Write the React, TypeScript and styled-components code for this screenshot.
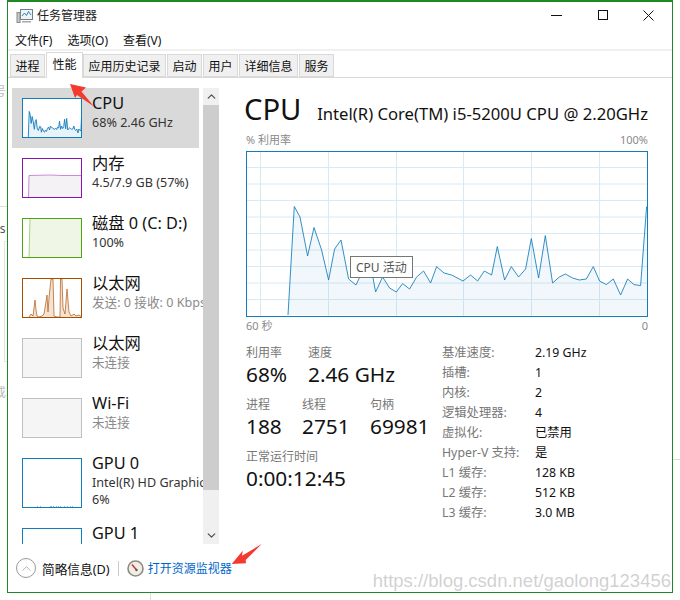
import styled, { createGlobalStyle } from 'styled-components';
import { ChevronUp, ChevronDown } from 'lucide-react';

const GlobalStyle = createGlobalStyle`
  html, body {
    margin: 0;
    padding: 0;
    background: #fff;
    overflow: hidden;
  }
`;

const UI_FONT = `"Noto Sans", "Noto Sans CJK SC", sans-serif`;

const Page = styled.div`
  position: relative;
  width: 680px;
  height: 600px;
  overflow: hidden;
  font-family: ${UI_FONT};
  color: #111;
`;

// the page behind the window, only slivers of it show
const BackGlyph = styled.div<{ $top: number; $dark?: boolean }>`
  position: absolute;
  left: -6px;
  top: ${p => p.$top}px;
  width: 13px;
  overflow: hidden;
  font-size: 12px;
  line-height: 14px;
  white-space: nowrap;
  color: ${p => (p.$dark ? '#555' : '#bbb')};
`;

const BackBox = styled.div`
  position: absolute;
  left: 4px;
  top: 241px;
  width: 3px;
  height: 121px;
  box-sizing: border-box;
  border: 1px solid #e4e4e4;
  border-right: none;
`;

const BackRule = styled.div<{ $left: number; $top: number; $w: number; $h: number }>`
  position: absolute;
  left: ${p => p.$left}px;
  top: ${p => p.$top}px;
  width: ${p => p.$w}px;
  height: ${p => p.$h}px;
  background: #ddd;
`;

const Window = styled.div`
  position: relative;
  box-sizing: border-box;
  margin-left: 7px;
  width: 666px;
  height: 593px;
  border: 1px solid #1f8a24;
  border-top-width: 2px;
  background: #fff;
  display: flex;
  flex-direction: column;
`;

const TitleBar = styled.div`
  height: 28px;
  display: flex;
  align-items: center;
  padding-left: 8px;
  gap: 4px;
  font-size: 12px;
  color: #222;
  svg {
    margin-top: -1px;
  }
`;

const TitleText = styled.span`
  margin-top: -2px;
`;

const WinButtons = styled.div`
  margin-left: auto;
  margin-right: 18px;
  display: flex;
  gap: 35px;
  svg {
    display: block;
  }
`;

const MenuBar = styled.div`
  height: 19px;
  display: flex;
  align-items: center;
  gap: 15px;
  padding-left: 7px;
  font-size: 12px;
`;

const TabStrip = styled.div`
  height: 29px;
  box-sizing: border-box;
  border-top: 2px solid #f0f0f0;
  border-bottom: 1px solid #d9d9d9;
  display: flex;
  align-items: flex-end;
  padding-left: 2px;
`;

const Tab = styled.div<{ $active?: boolean }>`
  box-sizing: border-box;
  height: ${p => (p.$active ? '26px' : '23px')};
  margin-bottom: ${p => (p.$active ? '-1px' : '0')};
  padding: ${p => (p.$active ? '0 5.5px 3px' : '0 4.5px')};
  margin-right: ${p => (p.$active ? '0' : '1px')};
  display: flex;
  align-items: center;
  font-size: 12px;
  background: ${p => (p.$active ? '#fff' : '#f0f0f0')};
  border: 1px solid #d9d9d9;
  border-bottom: ${p => (p.$active ? 'none' : '1px solid #d9d9d9')};
`;

const Body = styled.div`
  height: 466px;
  box-sizing: border-box;
  flex-shrink: 0;
  display: flex;
  padding-top: 10px;
`;

const SideList = styled.div`
  margin-left: 4px;
  width: 191px;
  height: 456px;
  overflow: hidden;
  flex-shrink: 0;
`;

const Row = styled.div<{ $selected?: boolean }>`
  display: flex;
  gap: 10px;
  padding: 10px 0 10px 10px;
  margin-right: 4px;
  background: ${p => (p.$selected ? '#d9d9d9' : 'transparent')};
`;

const Thumb = styled.svg<{ $h?: number }>`
  display: block;
  flex-shrink: 0;
  width: 60px;
  height: ${p => p.$h ?? 40}px;
`;

const RowText = styled.div`
  min-width: 0;
  white-space: nowrap;
  margin-top: -5px;
`;

const RowName = styled.div`
  font-size: 16.3px;
  line-height: 21px;
`;

const RowSub = styled.div<{ $muted?: boolean }>`
  font-size: 12.6px;
  line-height: 17px;
  color: ${p => (p.$muted ? '#8a8a8a' : '#333')};
`;

const ScrollBar = styled.div`
  width: 16px;
  height: 456px;
  flex-shrink: 0;
  background: #f0f0f0;
  display: flex;
  flex-direction: column;
  align-items: center;
  color: #555;
`;

const ScrollArrow = styled.div`
  height: 17px;
  flex-shrink: 0;
  display: flex;
  align-items: center;
  justify-content: center;
`;

const ScrollThumb = styled.div`
  width: 100%;
  height: 385px;
  background: #cdcdcd;
`;

const ScrollGap = styled.div`
  flex: 1;
`;

const Main = styled.div`
  margin-left: 27px;
  width: 402px;
  display: flex;
  flex-direction: column;
`;

const Heading = styled.div`
  display: flex;
  align-items: baseline;
  justify-content: space-between;
  box-sizing: border-box;
  height: 44px;
  padding-top: 3px;
  white-space: nowrap;
`;

const HeadingTitle = styled.div`
  font-size: 29.2px;
  line-height: 36px;
  margin-left: -2px;
`;

const HeadingModel = styled.div`
  font-size: 16.65px;
`;

const AxisRow = styled.div`
  display: flex;
  justify-content: space-between;
  font-size: 11px;
  line-height: 15px;
  color: #8a8a8a;
`;

const ChartWrap = styled.div`
  position: relative;
  height: 166px;
  margin: 4px 0 1px;
`;

const Chart = styled.svg`
  display: block;
  width: 402px;
  height: 166px;
`;

const ChartTip = styled.div`
  position: absolute;
  left: 104px;
  top: 105px;
  box-sizing: border-box;
  height: 22px;
  padding: 0 5px;
  display: flex;
  align-items: center;
  background: #fff;
  border: 1px solid #767676;
  font-size: 12px;
  color: #555;
  white-space: nowrap;
`;

const Stats = styled.div`
  display: flex;
  margin-top: 12px;
`;

const StatsLeft = styled.div`
  width: 196px;
  display: flex;
  flex-direction: column;
  gap: 9px;
`;

const StatLine = styled.div<{ $cols: string }>`
  display: grid;
  grid-template-columns: ${p => p.$cols};
`;

const StatLabel = styled.div`
  font-size: 12px;
  line-height: 16px;
  color: #777;
`;

const StatValue = styled.div`
  font-size: 20.8px;
  line-height: 27px;
  white-space: nowrap;
`;

const Specs = styled.div`
  display: grid;
  grid-template-columns: 93px auto;
  grid-auto-rows: 20px;
  align-items: center;
  font-size: 12.3px;
  margin-top: -3px;
`;

const SpecLabel = styled.div`
  color: #777;
`;

const SpecValue = styled.div`
  color: #111;
`;

const Footer = styled.div`
  flex: 1;
  display: flex;
  align-items: center;
  padding-left: 8px;
`;

const RoundButton = styled.div`
  box-sizing: border-box;
  width: 20px;
  height: 20px;
  border-radius: 50%;
  border: 1px solid #999;
  color: #999;
  display: flex;
  align-items: center;
  justify-content: center;
  margin-right: 6px;
`;

const FooterLabel = styled.span`
  font-size: 12.7px;
`;

const FooterDivider = styled.div`
  width: 1px;
  height: 15px;
  background: #ccc;
  margin: 0 8px;
`;

const MonitorLink = styled.span`
  color: #0066cc;
  font-size: 12px;
  margin-left: 4px;
`;

const Overlay = styled.svg`
  position: absolute;
  left: 0;
  top: 0;
  width: 680px;
  height: 600px;
  pointer-events: none;
`;

const Watermark = styled.div`
  position: absolute;
  right: 9px;
  top: 570px;
  font-family: "Liberation Sans", Arial, sans-serif;
  font-size: 18.5px;
  line-height: 22px;
  color: rgba(170, 170, 170, 0.55);
  white-space: nowrap;
`;

// CPU history in page pixels, read off the big graph
const CPU_POINTS: [number, number][] = [
  [288, 315], [294.3, 206.5], [300, 217], [307.6, 256], [314, 227.5], [321.6, 250], [328.6, 280],
  [334.6, 249], [341, 240], [348.6, 279], [356, 285], [364, 268], [371.6, 270], [375.6, 292],
  [382.6, 277], [389.6, 288], [396.3, 292], [402.6, 283.6], [409.6, 289], [416.6, 277],
  [423.6, 271], [430.6, 283], [436.6, 266.6], [444, 273], [451.6, 275], [463, 281], [470.6, 275],
  [477.6, 281], [484.3, 271], [491.6, 275], [497.3, 246.6], [504.6, 280], [511.3, 266.6],
  [518.6, 277], [525.6, 269], [531.3, 238.6], [538.6, 278], [545.3, 235.6], [552.6, 283],
  [559.3, 277], [565.3, 274], [572.6, 278], [579.3, 280], [586.3, 279], [593.3, 266.6],
  [599.6, 281], [606.3, 284.6], [613.3, 279], [620.6, 295], [627.6, 279], [634, 284.6],
  [640.6, 285.6], [646.6, 206.6],
];

const toPath = (pts: [number, number][]) => pts.map(([x, y]) => `${x},${y}`).join(' ');

const BLUE = '#117dbb';

function BigChart() {
  const vLines = [260, 328, 396, 463, 531, 599];
  const hLines = [167.5, 184, 200.5, 217, 233.5, 250, 266.5, 283, 299.5];
  const line = toPath(CPU_POINTS);
  return (
    <Chart viewBox="246 151 402 166">
      {vLines.map(x => <line key={x} x1={x + 0.5} x2={x + 0.5} y1={151} y2={316} stroke="#d9eaf5" />)}
      {hLines.map(y => <line key={y} x1={246} x2={647} y1={y} y2={y} stroke="#d9eaf5" />)}
      <polygon points={`${line} 647,315.5`} fill="rgba(17,125,187,0.06)" />
      <polyline points={line} fill="none" stroke={BLUE} strokeWidth={1} opacity={0.85} />
      <rect x={246.5} y={151.5} width={401} height={165} fill="none" stroke={BLUE} />
    </Chart>
  );
}

function CpuThumb() {
  const scaled = CPU_POINTS.map(([x, y]): [number, number] => [
    ((x - 246) * 60) / 402,
    ((y - 151) * 40) / 165,
  ]);
  const line = toPath(scaled);
  return (
    <Thumb viewBox="0 0 60 40">
      <rect x={0} y={0} width={60} height={40} fill="#fff" />
      <polygon points={`${line} 60,40`} fill="#e8f2f9" />
      <polyline points={line} fill="none" stroke={BLUE} strokeWidth={0.9} />
      <rect x={0.5} y={0.5} width={59} height={39} fill="none" stroke={BLUE} />
    </Thumb>
  );
}

function MemoryThumb() {
  return (
    <Thumb viewBox="0 0 60 40">
      <rect x={0} y={0} width={60} height={40} fill="#fff" />
      <polygon points="6.5,40 7,17.5 28,17 40,17.5 60,17.5 60,40" fill="#f4f2f4" />
      <polyline points="6.5,40 7,17.5 28,17 40,17.5 60,17.5" fill="none" stroke="#c58fd6" />
      <rect x={0.5} y={0.5} width={59} height={39} fill="none" stroke="#8b12ae" />
    </Thumb>
  );
}

function DiskThumb() {
  return (
    <Thumb viewBox="0 0 60 40">
      <rect x={0} y={0} width={60} height={40} fill="#fff" />
      <polygon points="7,40 8,1 60,1 60,40" fill="#eff6e6" />
      <line x1={7} y1={40} x2={8} y2={1} stroke="#a5d47e" />
      <rect x={0.5} y={0.5} width={59} height={39} fill="none" stroke="#4da60c" />
    </Thumb>
  );
}

function NetThumb() {
  const pts =
    '7,39 9,36 11,38 12,30 13,22 14,32 15,38 17,39 20,38 22,36 23,30 25,17 26,34 27,20 29,1 31,1 32,38 35,39 38,39 38.5,1 40,1 41,30 43,36 45,11 47,34 49,38 52,36 54,38 57,37 60,39 60,40 7,40';
  return (
    <Thumb viewBox="0 0 60 40">
      <rect x={0} y={0} width={60} height={40} fill="#fff" />
      <polygon points={pts} fill="#f3e3d3" />
      <polyline points={pts} fill="none" stroke="#b9682a" strokeWidth={0.8} />
      <rect x={0.5} y={0.5} width={59} height={39} fill="none" stroke="#a74f01" />
    </Thumb>
  );
}

function EmptyThumb() {
  return (
    <Thumb viewBox="0 0 60 40">
      <rect x={0.5} y={0.5} width={59} height={39} fill="#f5f5f5" stroke="#c0c0c0" />
    </Thumb>
  );
}

function GpuThumb({ h }: { h: number }) {
  return (
    <Thumb viewBox={`0 0 60 ${h}`} $h={h}>
      <rect x={0.5} y={0.5} width={59} height={h - 1} fill="#fff" stroke={BLUE} />
      {[15, 18, 28, 29, 31, 34, 36, 38, 42, 45, 48, 50].map(x => (
        <rect key={x} x={x} y={h - 2} width={1} height={1} fill="#7db9dc" />
      ))}
    </Thumb>
  );
}

function AppIcon() {
  return (
    <svg width="17" height="16" viewBox="0 0 17 16">
      <rect x="4.5" y="1.5" width="12" height="10" fill="#eef3f6" stroke="#6f7f88" />
      <polyline points="6,8 8.5,5 10.5,7.5 12.5,3.5 15,7" fill="none" stroke="#2f87b8" />
      <rect x="1" y="4.5" width="3" height="10" fill="#c9c9c9" stroke="#8a8a8a" />
      <rect x="6" y="13" width="9" height="1.5" fill="#a8a8a8" />
    </svg>
  );
}

function MonitorIcon() {
  return (
    <svg width="17" height="17" viewBox="0 0 17 17">
      <circle cx="8.5" cy="8.5" r="7.5" fill="#f1eee8" stroke="#8f8a80" strokeWidth="1.6" />
      <line x1="5" y1="4.5" x2="9.5" y2="10" stroke="#c8352b" strokeWidth="1.4" />
      <circle cx="9.5" cy="10" r="1.2" fill="#555" />
    </svg>
  );
}

const specs: [string, string][] = [
  ['基准速度:', '2.19 GHz'],
  ['插槽:', '1'],
  ['内核:', '2'],
  ['逻辑处理器:', '4'],
  ['虚拟化:', '已禁用'],
  ['Hyper-V 支持:', '是'],
  ['L1 缓存:', '128 KB'],
  ['L2 缓存:', '512 KB'],
  ['L3 缓存:', '3.0 MB'],
];

const tabs = ['进程', '性能', '应用历史记录', '启动', '用户', '详细信息', '服务'];

export default function App() {
  return (
    <Page>
      <GlobalStyle />
      <BackGlyph $top={85}>号</BackGlyph>
      <BackGlyph $top={222} $dark>cs</BackGlyph>
      <BackGlyph $top={386}>或</BackGlyph>
      <BackRule $left={0} $top={206} $w={7} $h={1} />
      <BackRule $left={673} $top={459} $w={7} $h={1} />
      <BackRule $left={150} $top={593} $w={1} $h={7} />
      <BackBox />
      <Window>
        <TitleBar>
          <AppIcon />
          <TitleText>任务管理器</TitleText>
          <WinButtons>
            <svg width="11" height="11" viewBox="0 0 11 11"><line x1="0" y1="5.5" x2="11" y2="5.5" stroke="#111" /></svg>
            <svg width="11" height="11" viewBox="0 0 11 11"><rect x="1.5" y="0.5" width="9" height="9" fill="none" stroke="#111" /></svg>
            <svg width="11" height="11" viewBox="0 0 11 11"><path d="M0.5 0.5 L10.5 10.5 M10.5 0.5 L0.5 10.5" stroke="#111" fill="none" /></svg>
          </WinButtons>
        </TitleBar>
        <MenuBar>
          <span>文件(F)</span>
          <span>选项(O)</span>
          <span>查看(V)</span>
        </MenuBar>
        <TabStrip>
          {tabs.map(t => <Tab key={t} $active={t === '性能'}>{t}</Tab>)}
        </TabStrip>
        <Body>
          <SideList>
            <Row $selected>
              <CpuThumb />
              <RowText>
                <RowName>CPU</RowName>
                <RowSub>68%  2.46 GHz</RowSub>
              </RowText>
            </Row>
            <Row>
              <MemoryThumb />
              <RowText>
                <RowName>内存</RowName>
                <RowSub>4.5/7.9 GB (57%)</RowSub>
              </RowText>
            </Row>
            <Row>
              <DiskThumb />
              <RowText>
                <RowName>磁盘 0 (C: D:)</RowName>
                <RowSub>100%</RowSub>
              </RowText>
            </Row>
            <Row>
              <NetThumb />
              <RowText>
                <RowName>以太网</RowName>
                <RowSub $muted>发送: 0 接收: 0 Kbps</RowSub>
              </RowText>
            </Row>
            <Row>
              <EmptyThumb />
              <RowText>
                <RowName>以太网</RowName>
                <RowSub $muted>未连接</RowSub>
              </RowText>
            </Row>
            <Row>
              <EmptyThumb />
              <RowText>
                <RowName>Wi-Fi</RowName>
                <RowSub $muted>未连接</RowSub>
              </RowText>
            </Row>
            <Row>
              <GpuThumb h={50} />
              <RowText>
                <RowName>GPU 0</RowName>
                <RowSub>Intel(R) HD Graphics 5500</RowSub>
                <RowSub>6%</RowSub>
              </RowText>
            </Row>
            <Row>
              <GpuThumb h={50} />
              <RowText>
                <RowName>GPU 1</RowName>
              </RowText>
            </Row>
          </SideList>
          <ScrollBar>
            <ScrollArrow><ChevronUp size={13} strokeWidth={2.5} /></ScrollArrow>
            <ScrollThumb />
            <ScrollGap />
            <ScrollArrow><ChevronDown size={13} strokeWidth={2.5} /></ScrollArrow>
          </ScrollBar>
          <Main>
            <Heading>
              <HeadingTitle>CPU</HeadingTitle>
              <HeadingModel>Intel(R) Core(TM) i5-5200U CPU @ 2.20GHz</HeadingModel>
            </Heading>
            <AxisRow><span>% 利用率</span><span>100%</span></AxisRow>
            <ChartWrap>
              <BigChart />
              <ChartTip>CPU 活动</ChartTip>
            </ChartWrap>
            <AxisRow><span>60 秒</span><span>0</span></AxisRow>
            <Stats>
              <StatsLeft>
                <div>
                  <StatLine $cols="62px 1fr">
                    <StatLabel>利用率</StatLabel>
                    <StatLabel>速度</StatLabel>
                  </StatLine>
                  <StatLine $cols="62px 1fr">
                    <StatValue>68%</StatValue>
                    <StatValue>2.46 GHz</StatValue>
                  </StatLine>
                </div>
                <div>
                  <StatLine $cols="56px 68px 1fr">
                    <StatLabel>进程</StatLabel>
                    <StatLabel>线程</StatLabel>
                    <StatLabel>句柄</StatLabel>
                  </StatLine>
                  <StatLine $cols="56px 68px 1fr">
                    <StatValue>188</StatValue>
                    <StatValue>2751</StatValue>
                    <StatValue>69981</StatValue>
                  </StatLine>
                </div>
                <div>
                  <StatLabel>正常运行时间</StatLabel>
                  <StatValue>0:00:12:45</StatValue>
                </div>
              </StatsLeft>
              <Specs>
                {specs.map(([k, v]) => [
                  <SpecLabel key={k}>{k}</SpecLabel>,
                  <SpecValue key={k + v}>{v}</SpecValue>,
                ])}
              </Specs>
            </Stats>
          </Main>
        </Body>
        <Footer>
          <RoundButton><ChevronUp size={15} strokeWidth={1.2} /></RoundButton>
          <FooterLabel>简略信息(D)</FooterLabel>
          <FooterDivider />
          <MonitorIcon />
          <MonitorLink>打开资源监视器</MonitorLink>
        </Footer>
      </Window>
      <Watermark>https://blog.csdn.net/gaolong123456</Watermark>
      <Overlay viewBox="0 0 680 600">
        <polygon points="70,84 86,87.5 81.5,91.5 94,106.5 77,95 75,98" fill="#f4392f" />
        <polygon points="231.7,564 242.7,550.7 242,555.7 261.7,544 245.7,560 246,563.3" fill="#f4392f" />
      </Overlay>
    </Page>
  );
}
